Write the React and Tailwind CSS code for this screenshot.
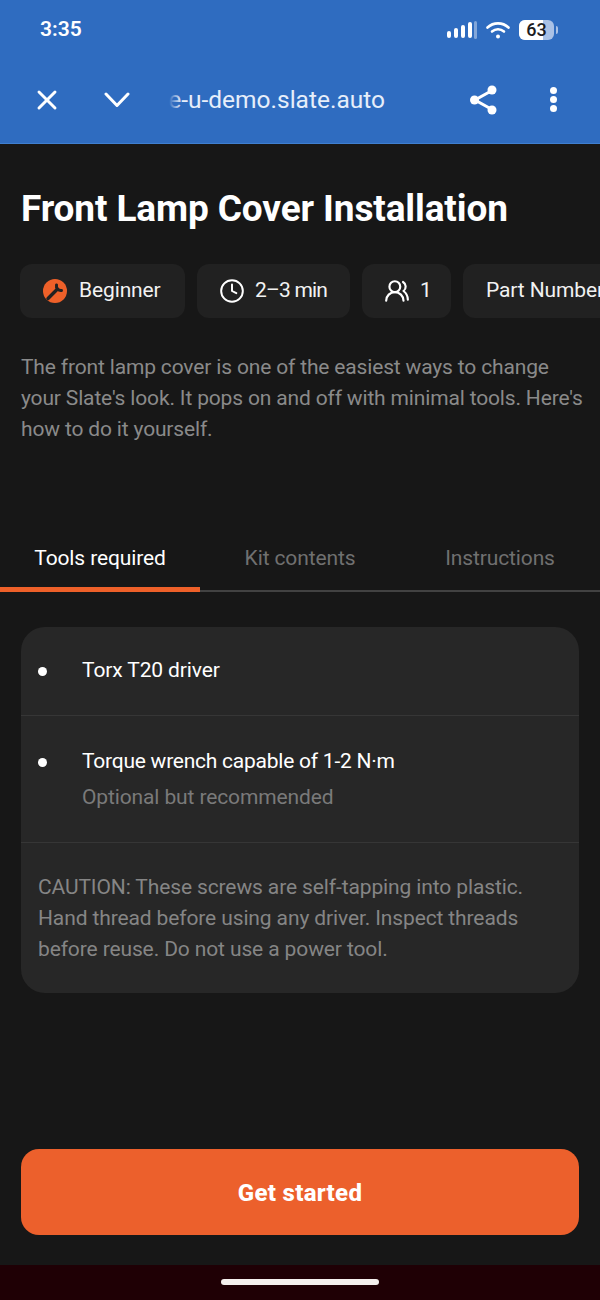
import React from 'react'
import { X, Clock, UsersRound } from 'lucide-react'

function Signal() {
  return (
    <svg width="30" height="18" viewBox="0 0 30 18" fill="#fff">
      <rect x="0" y="10" width="4" height="7" rx="2" />
      <rect x="7" y="7" width="4" height="10" rx="2" />
      <rect x="14" y="4" width="4" height="13" rx="2" />
      <rect x="21" y="1" width="4" height="16" rx="2" />
      <rect x="27" y="0" width="3" height="18" rx="1.5" fill="#fff" fillOpacity="0.4" />
    </svg>
  )
}

function Wifi() {
  return (
    <svg width="24" height="18" viewBox="0 0 24 18" fill="none" stroke="#fff" strokeWidth="2.6" strokeLinecap="round">
      <path d="M1.5 6.5C7.5 1 16.5 1 22.5 6.5" />
      <path d="M6 10.5C9.5 7.5 14.5 7.5 18 10.5" />
      <circle cx="12" cy="15.5" r="2" fill="#fff" stroke="none" />
    </svg>
  )
}

function Battery() {
  return (
    <div className="flex items-center gap-[2px]">
      <div className="relative w-[35px] h-[20px] rounded-[6px] overflow-hidden bg-[#a9c1e6] flex items-center justify-center">
        <div className="absolute inset-y-0 left-0 w-[24px] bg-white" />
        <span className="relative text-[18px] leading-none font-medium text-[#1c1c1e]">63</span>
      </div>
      <div className="w-[2px] h-[8px] rounded-r-full bg-[#a9c1e6]" />
    </div>
  )
}

function ShareIcon() {
  return (
    <svg width="30" height="32" viewBox="0 0 30 32" fill="#fff" stroke="#fff">
      <path d="M23 6.5 L6 16 L23 25.5" fill="none" strokeWidth="3" />
      <circle cx="23" cy="6" r="4.5" stroke="none" />
      <circle cx="5.5" cy="16" r="4.5" stroke="none" />
      <circle cx="23" cy="26" r="4.5" stroke="none" />
    </svg>
  )
}

function Chevron() {
  return (
    <svg width="26" height="16" viewBox="0 0 26 16" fill="none" stroke="#fff" strokeWidth="3" strokeLinecap="round" strokeLinejoin="round" className="ml-[41px] flex-shrink-0">
      <path d="M2 2 L13 13.5 L24 2" />
    </svg>
  )
}

function WrenchBadge() {
  return (
    <svg width="24" height="24" viewBox="0 0 24 24">
      <circle cx="12" cy="12" r="12" fill="#ee6029" />
      <path d="M13.5 6A4.6 4.6 0 0 0 18.5 11.5" fill="none" stroke="#212121" strokeWidth="3" strokeLinecap="round" />
      <path d="M5 19.5L13.5 11" fill="none" stroke="#212121" strokeWidth="3.4" strokeLinecap="round" />
    </svg>
  )
}

function Chip({ icon, label, className, labelClass = '' }) {
  return (
    <div className={`h-[54px] rounded-[12px] bg-[#212121] flex items-center flex-shrink-0 ${className}`}>
      {icon}
      <span className={`text-[21px] leading-[28px] pb-[3px] text-[#f2f2f2] whitespace-nowrap ${labelClass}`}>{label}</span>
    </div>
  )
}

export default function App() {
  return (
    <div className="w-[600px] h-[1300px] overflow-hidden flex flex-col bg-[#171717] text-white font-['Roboto',sans-serif]">
      {/* Browser chrome */}
      <header className="h-[144px] flex-shrink-0 bg-[#2f6cc0] border-b border-[#3f7fd0] flex flex-col">
        <div className="flex items-center justify-between pl-[40px] pr-[42px] pt-[10px] h-[48px]">
          <span className="text-[21px] font-semibold pt-[2px]">3:35</span>
          <div className="flex items-center gap-[9px] pt-[2px]">
            <Signal />
            <Wifi />
            <Battery />
          </div>
        </div>
        <div className="flex items-center flex-1 pt-[8px] pl-[31px]">
          <X size={32} strokeWidth={2.2} className="flex-shrink-0" />
          <Chevron />
          <div className="relative ml-[39px] w-[216px] flex-shrink-0 overflow-hidden whitespace-nowrap text-[24.5px] leading-[32px] text-[#e6eefa] flex justify-end">
            <span>e-u-demo.slate.auto</span>
            <div className="absolute inset-y-0 left-0 w-[12px] bg-gradient-to-r from-[#2f6cc0] to-transparent" />
          </div>
          <div className="ml-[84px] flex-shrink-0">
            <ShareIcon />
          </div>
          <div className="ml-[51px] flex flex-col gap-[2px] flex-shrink-0">
            <span className="w-[7px] h-[7px] rounded-full bg-white" />
            <span className="w-[7px] h-[7px] rounded-full bg-white" />
            <span className="w-[7px] h-[7px] rounded-full bg-white" />
          </div>
        </div>
      </header>

      <main className="flex-1 min-h-0 flex flex-col tracking-[-0.12px]">
        <h1 className="mt-[43px] px-[21px] text-[37px] leading-[44px] font-bold whitespace-nowrap">Front Lamp Cover Installation</h1>

        <div className="mt-[33px] pl-[20px] flex gap-[12px] overflow-hidden">
          <Chip className="w-[165px] pl-[23px] gap-[12px]" icon={<WrenchBadge />} label="Beginner" />
          <Chip className="w-[153px] pl-[22px] gap-[10px]" icon={<Clock size={26} strokeWidth={1.8} />} label="2–3 min" labelClass="tracking-[-0.8px]" />
          <Chip className="w-[89px] pl-[22px] gap-[10px]" icon={<UsersRound size={26} strokeWidth={2} />} label="1" />
          <Chip className="w-[200px] pl-[23px]" label="Part Number" />
        </div>

        <p className="mt-[34px] pl-[21px] pr-[10px] text-[21px] leading-[31px] tracking-[-0.16px] text-[#8a8a8a]">
          The front lamp cover is one of the easiest ways to change your Slate's look. It pops on and off with minimal tools. Here's how to do it yourself.
        </p>

        {/* Tabs */}
        <div className="mt-[99px] flex border-b-2 border-[#424242] h-[48px]">
          <div className="w-[200px] -mb-[2px] border-b-[5px] border-[#ee6029] text-center text-[21px] leading-[28px] text-white">Tools required</div>
          <div className="w-[200px] text-center text-[21px] leading-[28px] text-[#707070]">Kit contents</div>
          <div className="w-[200px] text-center text-[21px] leading-[28px] text-[#707070]">Instructions</div>
        </div>

        {/* Tools card */}
        <section className="mt-[35px] mx-[21px] rounded-[24px] bg-[#272727] flex flex-col">
          <div className="h-[89px] flex items-center pl-[17px] gap-[35px] border-b border-[#363636]">
            <span className="w-[9px] h-[9px] rounded-full bg-white" />
            <span className="text-[21px]">Torx T20 driver</span>
          </div>
          <div className="h-[127px] flex pl-[17px] gap-[35px] pt-[31px] border-b border-[#363636]">
            <span className="w-[9px] h-[9px] rounded-full bg-white mt-[11px]" />
            <div className="flex flex-col gap-[8px]">
              <span className="text-[21px] leading-[28px] tracking-[-0.24px]">Torque wrench capable of 1-2 N·m</span>
              <span className="text-[21px] leading-[28px] text-[#7a7a7a]">Optional but recommended</span>
            </div>
          </div>
          <p className="px-[17px] pt-[29px] pb-[28px] text-[21px] leading-[31px] text-[#858585]">
            CAUTION: These screws are self-tapping into plastic. Hand thread before using any driver. Inspect threads before reuse. Do not use a power tool.
          </p>
        </section>

        <div className="mt-auto mx-[21px] mb-[30px] h-[86px] rounded-[18px] bg-[#ec602c] flex items-center justify-center text-[24px] font-extrabold tracking-[0.3px]">
          <span className="pt-[1px]">Get started</span>
        </div>
      </main>

      {/* Home indicator */}
      <footer className="h-[35px] flex-shrink-0 bg-[#1f0005] flex items-center justify-center pb-[1px]">
        <div className="w-[158px] h-[6px] rounded-full bg-[#f5f0ee]" />
      </footer>
    </div>
  )
}
